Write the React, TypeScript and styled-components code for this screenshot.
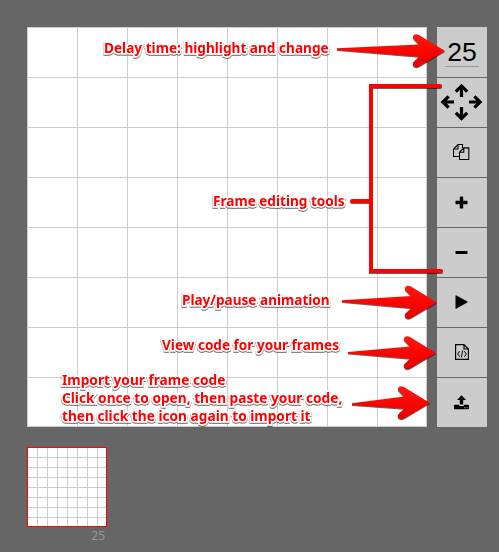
import React from "react";
import styled, { createGlobalStyle } from "styled-components";

const GlobalStyle = createGlobalStyle`
  body { margin: 0; background: #666; }
`;

const Page = styled.main`
  position: relative;
  box-sizing: border-box;
  width: 499px;
  height: 552px;
  padding: 27px 12px 0 27px;
  overflow: hidden;
  background: #666;
`;

const Editor = styled.section`
  display: flex;
  gap: 10px;
`;

const Canvas = styled.div`
  display: grid;
  box-sizing: border-box;
  width: 400px;
  height: 400px;
  grid-template: repeat(7, 50px) 49px / repeat(7, 50px) 49px;
  border: solid #ccc;
  border-width: 0 1px 1px 0;
`;

const Cell = styled.div`
  border: solid #ccc;
  border-width: 1px 0 0 1px;
  background: #fff;
`;

const Toolbar = styled.nav`
  display: flex;
  flex-direction: column;
  width: 50px;
`;

const Tool = styled.button`
  display: flex;
  align-items: center;
  justify-content: center;
  box-sizing: border-box;
  width: 50px;
  height: 50px;
  padding: 0 1px 1px 0;
  border: 0;
  border-top: 1px solid #666;
  background: #ccc;
`;

const DelayBox = styled.div`
  display: flex;
  justify-content: center;
  align-items: flex-start;
  box-sizing: border-box;
  height: 50px;
  padding-top: 9px;
  background: #ccc;
`;

const Delay = styled.span`
  box-sizing: border-box;
  width: 34px;
  height: 31px;
  border-bottom: 1px solid #999;
  font: 26.6px/32px "Liberation Sans", Arial, sans-serif;
  text-align: center;
  color: #000;
`;

const Frame = styled.section`
  width: 80px;
  margin-top: 20px;
`;

const Thumb = styled.div`
  display: grid;
  box-sizing: border-box;
  width: 80px;
  height: 80px;
  grid-template: 9px repeat(6, 10px) 9px / 9px repeat(6, 10px) 9px;
  border: 1px solid #f00;
  background: #fff;
`;

const ThumbCell = styled.i<{ $left: boolean; $top: boolean }>`
  border: solid #ccc;
  border-width: ${(p) => (p.$top ? 1 : 0)}px 0 0 ${(p) => (p.$left ? 1 : 0)}px;
`;

const FrameDelay = styled.div`
  padding-right: 2px;
  font: 12px/17px "Noto Sans", "Open Sans", sans-serif;
  text-align: right;
  color: #999;
`;

const Note = styled.div<{ $x: number; $y: number; $scale?: number }>`
  position: absolute;
  left: ${(p) => p.$x}px;
  top: ${(p) => p.$y}px;
  transform: scaleX(${(p) => p.$scale ?? 0.97});
  transform-origin: 0 0;
  white-space: pre;
  font: bold 14px/18px "Noto Sans", "Open Sans", sans-serif;
  color: #f00;
  -webkit-text-stroke: 3.4px #fff;
  paint-order: stroke fill;
  filter: drop-shadow(0.3px 1px 0.7px rgba(0, 0, 0, 0.6));
`;

const Marks = styled.svg`
  position: absolute;
  left: 0;
  top: 0;
  filter: drop-shadow(0.5px 1px 0.7px rgba(0, 0, 0, 0.6));
`;

type ArrowProps = { x: number; y: number; tailX: number; tailY: number };

const Arrow = ({ x, y, tailX, tailY }: ArrowProps) => (
  <path
    fill="url(#arrowFill)"
    d={`M${tailX} ${tailY - 0.8}L${x - 26} ${y - 6.6}L${x - 31} ${y - 11.5}
      C${x - 34} ${y - 15} ${x - 30} ${y - 18.5} ${x - 26} ${y - 16}
      L${x} ${y}L${x - 26} ${y + 15.5}
      C${x - 31} ${y + 18} ${x - 34} ${y + 13} ${x - 31} ${y + 10.5}
      L${x - 26} ${y + 5.8}L${tailX} ${tailY + 0.9}Z`}
  />
);

const MoveIcon = () => (
  <svg width="43" height="38" viewBox="0 0 43 38" fill="none" stroke="#000" strokeWidth="3.2">
    <path d="M21.5 14V3M15.8 8.6L21.5 2.9L27.2 8.6" />
    <path d="M21.5 24V35M15.8 29.8L21.5 35.5L27.2 29.8" />
    <path d="M14 19H3M8.6 13.3L2.9 19L8.6 24.7" />
    <path d="M29 19H40M34.4 13.3L40.1 19L34.4 24.7" />
  </svg>
);

const CopyIcon = () => (
  <svg width="17" height="16" viewBox="0 0 17 16" fill="none" stroke="#000" strokeWidth="1.1">
    <path d="M6.5 12.5H.5V5L5 .5H9.5V4M5 .5V5H.5" />
    <path d="M10.8 3.9H15.8V15.5H6.5V8.2ZM10.8 3.9V8.2H6.5" />
  </svg>
);

const PlusIcon = () => (
  <svg width="13" height="13" viewBox="0 0 13 13">
    <path d="M5.3 .5h2.4q.5 0 .5.5v3.8H12q.5 0 .5.5v2.4q0 .5-.5.5H8.2V12q0 .5-.5.5H5.3q-.5 0-.5-.5V8.2H1q-.5 0-.5-.5V5.3q0-.5.5-.5h3.8V1q0-.5.5-.5Z" />
  </svg>
);

const MinusIcon = () => (
  <svg width="13" height="13" viewBox="0 0 13 13">
    <rect x=".5" y="4.9" width="12" height="3.2" rx=".6" />
  </svg>
);

const PlayIcon = () => (
  <svg width="13" height="14" viewBox="0 0 13 14">
    <path d="M.5 .6Q.5 0 1 .3L12.4 6.6q.5.4 0 .8L1 13.7Q.5 14 .5 13.4Z" />
  </svg>
);

const CodeIcon = () => (
  <svg width="14" height="16" viewBox="0 0 14 16" fill="none" stroke="#000" strokeWidth="1.15">
    <path d="M.6 .6H9L13.4 5V15.4H.6ZM9 .6V5H13.4" />
    <path d="M4.7 7.2L2.7 10L4.7 12.8M9.3 7.2L11.3 10L9.3 12.8M7.7 6.4L6.3 13.4" strokeWidth="1" />
  </svg>
);

const UploadIcon = () => (
  <svg width="15" height="15" viewBox="0 0 15 15">
    <path d="M7.5 .2L12 5H9.2V9.5H5.8V5H3Z" />
    <path fillRule="evenodd" d="M.8 9.8H4.8Q5 11 6.2 11H8.8Q10 11 10.2 9.8H14.2Q15 9.8 15 10.6V13.4Q15 14.2 14.2 14.2H.8Q0 14.2 0 13.4V10.6Q0 9.8 .8 9.8ZM10.4 12.2v1h1v-1ZM12.6 12.2v1h1v-1Z" />
  </svg>
);

const tools = [
  { name: "Move frame", Icon: MoveIcon },
  { name: "Copy frame", Icon: CopyIcon },
  { name: "Add frame", Icon: PlusIcon },
  { name: "Remove frame", Icon: MinusIcon },
  { name: "Play", Icon: PlayIcon },
  { name: "View code", Icon: CodeIcon },
  { name: "Import code", Icon: UploadIcon },
];

const cells = Array.from({ length: 64 }, (_, i) => i);

export default function App() {
  return (
    <Page>
      <GlobalStyle />
      <Editor>
        <Canvas>
          {cells.map((i) => (
            <Cell key={i} />
          ))}
        </Canvas>
        <Toolbar>
          <DelayBox>
            <Delay>25</Delay>
          </DelayBox>
          {tools.map(({ name, Icon }) => (
            <Tool key={name} aria-label={name}>
              <Icon />
            </Tool>
          ))}
        </Toolbar>
      </Editor>
      <Frame>
        <Thumb>
          {cells.map((i) => (
            <ThumbCell key={i} $left={i % 8 > 0} $top={i > 7} />
          ))}
        </Thumb>
        <FrameDelay>25</FrameDelay>
      </Frame>
      <Marks width="499" height="552" viewBox="0 0 499 552">
        <defs>
          <linearGradient id="arrowFill" x1="0" y1="0" x2="0" y2="1">
            <stop offset="0" stopColor="#ff1a12" />
            <stop offset=".5" stopColor="#fb0500" />
            <stop offset="1" stopColor="#e60000" />
          </linearGradient>
        </defs>
        <Arrow x={445} y={51} tailX={337} tailY={49} />
        <Arrow x={437} y={302.5} tailX={342} tailY={301} />
        <Arrow x={436} y={353} tailX={348} tailY={352.7} />
        <Arrow x={430} y={403} tailX={352} tailY={404} />
        <path
          d="M440 86H371V271H441M371 201H352"
          fill="none"
          stroke="#f00"
          strokeWidth="4"
          strokeLinecap="round"
        />
      </Marks>
      <Note $x={104} $y={39} $scale={0.973}>Delay time: highlight and change</Note>
      <Note $x={213} $y={192}>Frame editing tools</Note>
      <Note $x={182} $y={291}>Play/pause animation</Note>
      <Note $x={162} $y={336}>View code for your frames</Note>
      <Note $x={62} $y={371} $scale={0.978}>
        {"Import your frame code\nClick once to open, then paste your code,\nthen click the icon again to import it"}
      </Note>
    </Page>
  );
}
